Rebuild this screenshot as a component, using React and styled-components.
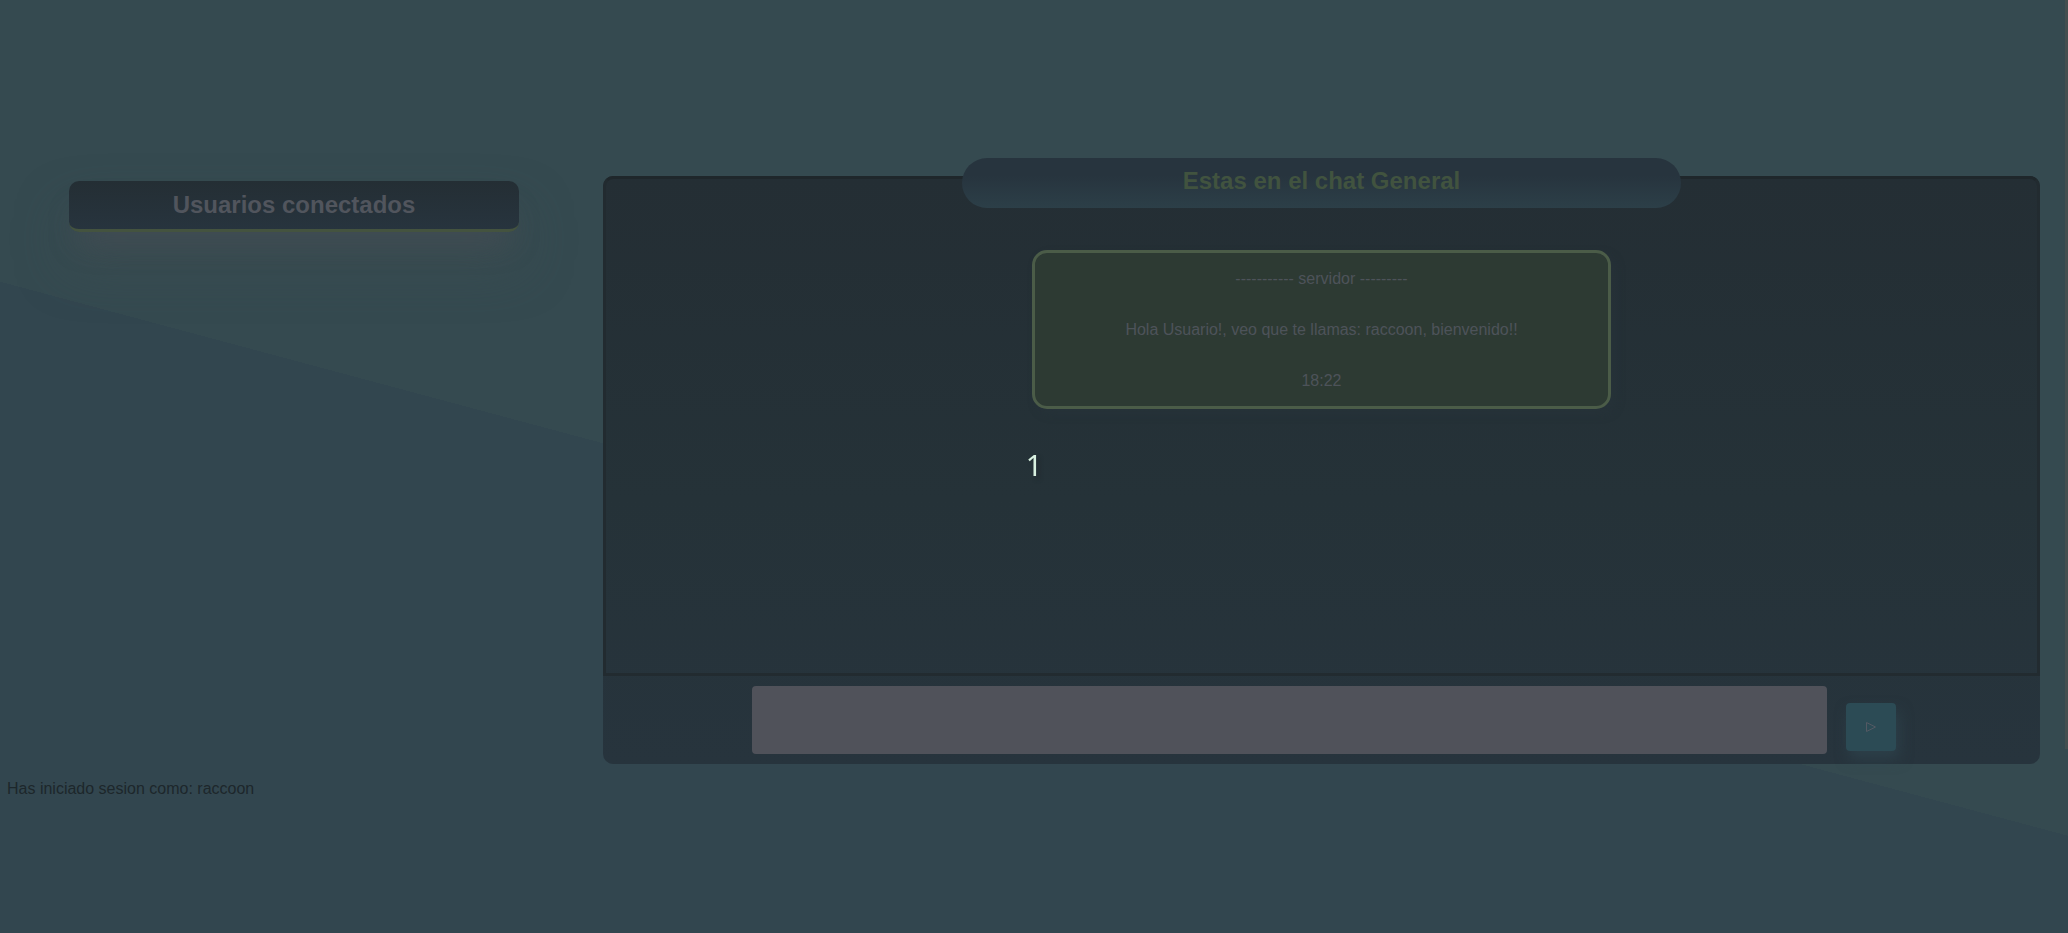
import React from "react";
import styled, { createGlobalStyle } from "styled-components";

const GlobalStyle = createGlobalStyle`
  * {
    box-sizing: border-box;
  }
  body {
    margin: 0;
    min-height: 100vh;
    font-family: "Liberation Sans", Arial, sans-serif;
    font-size: 16px;
    line-height: 18px;
    background: linear-gradient(195deg, #354a50 56.2%, #32464f 56.2%);
    background-attachment: fixed;
  }
`;

const Page = styled.div`
  padding-top: 176px;
`;

const Columns = styled.main`
  display: grid;
  grid-template-columns: 450fr 1437fr;
  column-gap: 84px;
  align-items: start;
  padding: 0 28px 0 69px;
`;

const UsersPanel = styled.aside`
  padding-top: 5px;
`;

const Heading = styled.h2`
  margin: 0;
  font-size: 24px;
  font-weight: bold;
  line-height: 48px;
  text-align: center;
`;

const UsersTitle = styled(Heading)`
  color: #51555d;
  background: linear-gradient(#242e34, #27343e);
  border-bottom: 3px solid #44533f;
  border-radius: 10px;
  box-shadow:
    0 20px 30px -10px rgba(84, 78, 88, 0.35),
    0 32px 50px rgba(64, 78, 82, 0.6);
`;

const ChatPanel = styled.section`
  border-radius: 10px;
  background: linear-gradient(#242e34, #253238 55%, #27343d);
`;

const Messages = styled.div`
  min-height: 500px;
  border: 3px solid #222b30;
  border-top-color: #1f272b;
  border-radius: 10px 10px 0 0;
`;

const ChatTitle = styled(Heading)`
  width: calc(50% + 4px);
  margin: -21px auto 42px;
  padding-bottom: 4px;
  line-height: 46px;
  color: #41533f;
  background: linear-gradient(#27343e 35%, #2c3f48);
  border-radius: 25px;
`;

const Message = styled.article`
  box-sizing: content-box;
  width: 40%;
  margin: 0 auto;
  border: 3px solid #4b5c48;
  border-radius: 15px;
  background: #2d3a33;
  color: #4d535a;
  text-align: center;
  box-shadow: 5px 5px 10px rgba(39, 52, 60, 0.4);
`;

const MessageLine = styled.p`
  margin: 0;
  line-height: 51px;
`;

const Composer = styled.form`
  display: flex;
  align-items: flex-end;
  gap: 19px;
  padding: 10px 144px 10px 149px;
`;

const MessageInput = styled.input`
  flex: 1;
  min-width: 0;
  height: 68px;
  padding: 0 12px;
  border: 0;
  border-radius: 4px;
  outline: 0;
  background: #50525a;
  color: #242e34;
  font: inherit;
`;

const SendButton = styled.button`
  display: flex;
  align-items: center;
  justify-content: center;
  width: 50px;
  height: 48px;
  margin: 0 0 3px;
  padding: 0;
  border: 0;
  border-radius: 4px;
  background: #2c4b55;
  box-shadow: 3px 8px 14px rgba(48, 72, 82, 0.6);
`;

const Session = styled.p`
  margin: 16px 7px 0;
  color: #1d272b;
`;

const CountdownOverlay = styled.div`
  position: fixed;
  inset: 0;
  display: flex;
  align-items: center;
  justify-content: center;
  padding-bottom: 3px;
  pointer-events: none;
  color: #d8f0e0;
  font-family: "Noto Sans", sans-serif;
  font-size: 29px;
  text-shadow: 3px 3px 4px rgba(30, 36, 42, 0.6);
`;

const ScrollMark = styled.div`
  position: fixed;
  top: 0;
  right: 0;
  width: 3px;
  height: 80.3%;
  background: #434f50;
`;

export default function App() {
  return (
    <>
      <GlobalStyle />
      <Page>
        <Columns>
          <UsersPanel>
            <UsersTitle>Usuarios conectados</UsersTitle>
          </UsersPanel>
          <ChatPanel>
            <Messages>
              <ChatTitle>Estas en el chat General</ChatTitle>
              <Message>
                <MessageLine>----------- servidor ---------</MessageLine>
                <MessageLine>Hola Usuario!, veo que te llamas: raccoon, bienvenido!!</MessageLine>
                <MessageLine>18:22</MessageLine>
              </Message>
            </Messages>
            <Composer onSubmit={(event) => event.preventDefault()}>
              <MessageInput type="text" aria-label="Mensaje" autoComplete="off" />
              <SendButton type="submit" aria-label="Enviar">
                <svg width="12" height="12" viewBox="0 0 12 12" fill="none" stroke="#535963" aria-hidden="true">
                  <path d="M1.5 1.5v9L10.5 6z" />
                </svg>
              </SendButton>
            </Composer>
          </ChatPanel>
        </Columns>
        <Session>Has iniciado sesion como: raccoon</Session>
      </Page>
      <ScrollMark />
      <CountdownOverlay>1</CountdownOverlay>
    </>
  );
}
